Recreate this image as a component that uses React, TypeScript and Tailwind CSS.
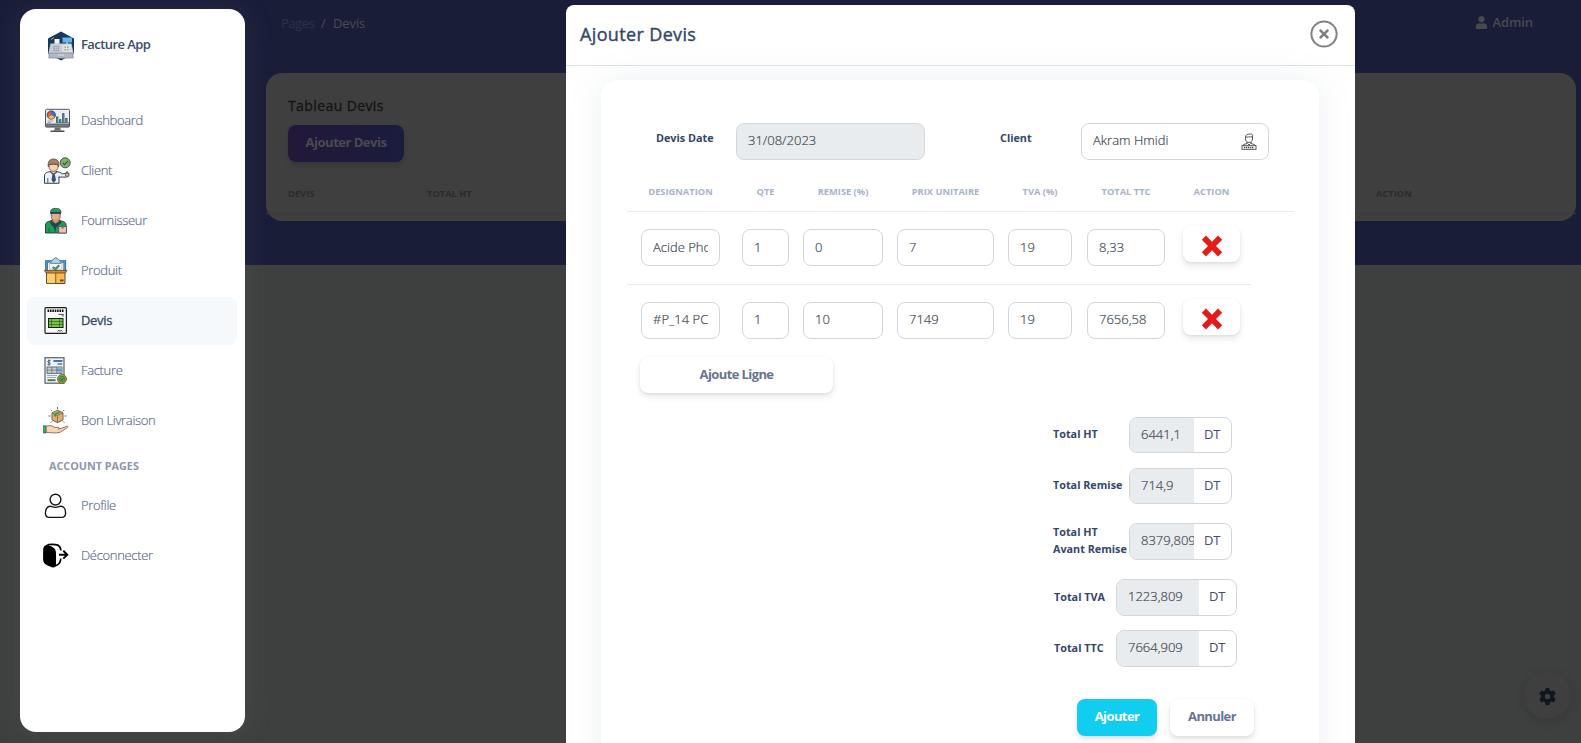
import React from "react";
import type { ReactNode } from "react";
import { FaUser } from "react-icons/fa";
import { FaGear } from "react-icons/fa6";

function Svg({ children }: { children: ReactNode }) {
  return (
    <svg width="28" height="28" viewBox="0 0 28 28" fill="none" className="shrink-0">
      {children}
    </svg>
  );
}

const DashboardIcon = () => (
  <Svg>
    <rect x="2.5" y="2.3" width="24" height="17.5" rx="1" fill="#e9eef5" stroke="#55575c" />
    <path d="M2.5 17h24v2a1 1 0 0 1-1 1h-22a1 1 0 0 1-1-1z" fill="#7b7d82" stroke="#4c4e52" strokeWidth=".8" />
    <path d="M12 20.5h5l1 3h-7z" fill="#6b6d72" />
    <rect x="7.5" y="23.4" width="14" height="1.6" rx=".5" fill="#4a4c50" />
    <circle cx="8.3" cy="8" r="4.2" fill="#3d6fc4" />
    <path d="M8.3 8V3.8a4.2 4.2 0 0 0-3 7z" fill="#e4573d" />
    <path d="M8.3 8l-3.2 2.8a4.2 4.2 0 0 0 6.8-.6z" fill="#f5c445" />
    <circle cx="8.3" cy="8" r="4.2" stroke="#3c3f4a" strokeWidth=".7" />
    <path d="M4.5 14h6M4.5 15.6h3.5" stroke="#8b929c" strokeWidth=".8" />
    <path d="M12.8 15.6h13" stroke="#38424c" strokeWidth=".6" />
    <path d="M14.2 15.5v-6M17.2 15.5v-3.2M20.3 15.5V6.3M23.4 15.5V11" stroke="#2f4858" strokeWidth="2.2" />
    <path d="M14.3 15.2v-5M17.3 15.2v-2.2M20.3 15.2V7.3M23.5 15.2v-3.4" stroke="#4d8f8d" strokeWidth="1.2" />
  </Svg>
);

const ClientIcon = () => (
  <Svg>
    <path d="M1.5 26.3v-7.5c0-2.8 2.6-4 6.5-4.3h5c3 .2 4.500 1.300 6.500 2.300l3.500-.4.6-1.600c1-.6 1.400.4 1.200 1.500l.9.200v2.400c-1.400 1.800-4.800 1.200-9.700 1.100v6.300z" fill="#e6f1fa" stroke="#3c4048" strokeWidth="1" />
    <path d="M4.800 21v5M16 21v-1.500" stroke="#4a4f58" strokeWidth=".9" />
    <path d="M7.500 14.500l3 2.800 3-2.800v-2h-6z" fill="#f4c9a5" />
    <path d="M9.500 17h2.200l1.300 6-2.300 3-2.200-3z" fill="#3a4f70" />
    <path d="M7 14.500l3.600 3 3.600-3" stroke="#3c4f70" strokeWidth="1.300" />
    <path d="M6 7.500h9v2.200a4.500 4.700 0 0 1-9 0z" fill="#f8d2b0" stroke="#564038" strokeWidth=".7" />
    <path d="M5.300 9.800C4.500 4.300 7 2 10.500 2s6.200 2.300 5.200 7.800l-1-2.500c-2 .3-3.400-.3-4.400-1.100-1 .8-2.500 1-3.900 1.100z" fill="#a9826b" stroke="#5b4539" strokeWidth=".8" />
    <path d="M22.500 16.600h3.300v2.500h-3.300z" fill="#f4c9a5" stroke="#4b4547" strokeWidth=".7" />
    <circle cx="22.200" cy="5.800" r="5" fill="#83b06e" stroke="#3f5540" strokeWidth="1" />
    <path d="M19.800 6l1.800 1.700 3.200-3.500" stroke="#35503a" strokeWidth="1.200" />
  </Svg>
);

const FournisseurIcon = () => (
  <Svg>
    <path d="M2.500 26V18c0-2.300 1.600-3.200 4-3.800l2.800-1h7l2.800 1c2.600.6 4 1.600 4 4v7.800z" fill="#1f9c58" stroke="#2a3338" strokeWidth=".9" />
    <path d="M6 26v-5M19.500 20v-2" stroke="#17603a" strokeWidth=".9" />
    <path d="M8 13.500l4.700 3.500 4.700-3.500 1 2.500-5.200 4.500-1 5-1.400-5L7 16z" fill="#2c3f52" />
    <path d="M8.300 6h8.900v3.500a4.400 4.800 0 0 1-8.900 0z" fill="#e9aa8c" stroke="#5d3f36" strokeWidth=".7" />
    <path d="M10 12.500h5.500v2L12.700 16 10 14.500z" fill="#d6957a" />
    <path d="M7.600 6V4.500C8 2 10 1.400 12.700 1.400S17.400 2 17.900 4.500V6z" fill="#22a45d" stroke="#2a3338" strokeWidth=".8" />
    <path d="M7.500 5.500c3.400-1 7-1 10.400 0v1.700c-3.400-1-7-1-10.400 0z" fill="#24445a" />
    <rect x="15.700" y="19.500" width="7.800" height="6.500" fill="#e3c3bb" stroke="#5e4747" strokeWidth=".8" />
    <path d="M18.300 19.500h2.600v2h-2.600z" fill="#9b7470" />
  </Svg>
);

const ProduitIcon = () => (
  <Svg>
    <path d="M3.500 14V4.500h18.300V14" stroke="#33495e" strokeWidth="2.600" fill="#f7fafc" />
    <path d="M3.500 14V4.500h18.300V14" stroke="#3d9be0" strokeWidth="1.600" />
    <path d="M6.500 12V5.500l3-2h6l3.500 2V12z" fill="#f3f7fb" stroke="#9ab0c4" strokeWidth=".6" />
    <path d="M9 3.300L11 2c.5-1.800 3-1.800 3.500 0l2.200 1.300 1.600 3H7.300z" fill="#b7d4ef" stroke="#54718e" strokeWidth=".9" />
    <path d="M9.800 10l2.600 2.300 3.800-4" stroke="#3e6f52" strokeWidth="2.200" />
    <path d="M9.800 10l2.600 2.300 3.800-4" stroke="#62b37b" strokeWidth="1" />
    <path d="M3.500 14h18.500v12.500H3.500z" fill="#fcb94b" stroke="#4c3b22" strokeWidth=".9" />
    <path d="M4 14.500h8.700v11.600H4z" fill="#ffcf6b" />
    <path d="M12.700 14v12.300" stroke="#7c5a25" strokeWidth=".9" />
    <path d="M1.300 13.400h22.800L22.400 16H3.200z" fill="#cf8b34" stroke="#5d4422" strokeWidth=".8" />
    <rect x="17" y="22.500" width="3.500" height="1.900" fill="#5e4829" />
  </Svg>
);

const DevisIcon = () => (
  <Svg>
    <rect x="2" y=".6" width="21.400" height="25.800" rx="1" fill="#f8f8f8" stroke="#1b1b1b" strokeWidth="1.200" />
    <path d="M4.500 3.700h16.300" stroke="#101010" strokeWidth="2.400" strokeDasharray="1.600 .8" />
    <path d="M15.500 7.400h5.300M18.800 8.900h2" stroke="#3a3a3a" strokeWidth=".9" />
    <rect x="5.500" y="11.500" width="14.500" height="9" fill="#78c63f" stroke="#141c0c" strokeWidth="1" />
    <path d="M5.500 14.500h14.500M5.500 17.500h14.500M8.500 11.500v9M16.500 11.500v9" stroke="#2c4c18" strokeWidth=".6" />
    <path d="M14.500 24.500l1.500-1.400 1 1.400 1.400-1.400 1 1.400" stroke="#222" strokeWidth=".8" />
  </Svg>
);

const FactureIcon = () => (
  <Svg>
    <rect x="2" y=".7" width="19" height="25.500" fill="#edf3fa" stroke="#596169" strokeWidth="1.200" />
    <path d="M7.500 3.700c-3-1-3.500 1.600-1.500 2s2 2.700-1.500 1.700M6 2.500v6" stroke="#45576a" strokeWidth="1" />
    <path d="M10.500 4h9" stroke="#3272b0" strokeWidth="1.900" />
    <path d="M14.500 7h4.700" stroke="#3e5670" strokeWidth="1.200" />
    <rect x="4" y="10" width="15" height="6.300" fill="#c9cdd5" stroke="#49515d" strokeWidth=".8" />
    <path d="M14 10.300h4.800v5.700H14z" fill="#83b5dd" />
    <path d="M4 13.100h15M8.800 10v6.300M13.700 10v6.300" stroke="#5e6876" strokeWidth=".7" />
    <path d="M4 18.500h10M4 20.500h9" stroke="#8d98a4" strokeWidth=".8" />
    <path d="M4.500 23.200h8" stroke="#4b7a36" strokeWidth="1.900" />
    <circle cx="19" cy="22" r="4.500" fill="#9aa23a" stroke="#6a6630" strokeWidth=".9" />
    <circle cx="19" cy="22" r="2.700" fill="#60a845" stroke="#3d6e35" strokeWidth=".7" />
    <path d="M17.600 22l1.200 1.100 2-2.200" stroke="#234c22" strokeWidth=".8" />
  </Svg>
);

const LivraisonIcon = () => (
  <Svg>
    <path d="M14.500 0v2.200M7.800 3l1.200 1.200M21.200 3L20 4.200M5.500 9h2M21.500 9h2M7.700 15.600l1.200-1.200M21.200 15.600L20 14.400" stroke="#51565c" strokeWidth=".9" />
    <path d="M14.500 3.200l5.500 2.700v7l-5.500 2.800L9 12.900v-7z" fill="#e0ac79" stroke="#755238" strokeWidth=".9" />
    <path d="M9 5.900l5.500 2.600L20 5.900M14.500 8.500v7" stroke="#875f40" strokeWidth=".8" />
    <path d="M11 6.800l5.500-2.700 2 1-5.500 2.800v2.200l-2-1z" fill="#3c9b4d" />
    <path d="M3 19.300c3.500-1.300 6-.8 8.500 1h3.700c1.500.2 1.300 1.500.3 1.800l3-.8 5.200-2c1.700-.3 1.700.7.600 1.400L17 25.300c-4.500 1.300-9 .3-14 0z" fill="#f9d5b1" stroke="#6e5949" strokeWidth=".8" />
    <rect x=".4" y="18.800" width="2.500" height="7.200" fill="#3fae4d" stroke="#2f6e3b" strokeWidth=".7" />
  </Svg>
);

const ProfileIcon = () => (
  <Svg>
    <g stroke="#151515" strokeWidth="1.400">
      <circle cx="12.500" cy="7.600" r="5.400" />
      <path d="M7.200 14.200c1.300 0 2.500 1.200 5.300 1.200s4-1.200 5.300-1.200c3.200 0 4.800 3.300 4.800 6.800 0 3.400-1.300 4.400-3.900 4.400H6.300c-2.600 0-3.900-1-3.900-4.400 0-3.500 1.600-6.800 4.800-6.800z" />
    </g>
  </Svg>
);

const LogoutIcon = () => (
  <Svg>
    <path d="M.1 9C.2 4.500 1.700 3 4.200 3.200c2 .2 4 .8 5.700 2 2.400 1.600 3.100 3.500 3.100 6.300v10.500c-.2 3-1.700 4-4.200 3.300L3.600 23C1.300 21.800.1 20 .1 17z" fill="#000" />
    <path d="M3.500 3.600C6 2 9 2.300 12.500 2.600c3.700.3 5.200 2 5.300 6M17.800 16.500c-.3 4.300-2 6.500-5.800 7.300" stroke="#000" strokeWidth="1.700" />
    <path d="M16 12.700h7.500M20.300 8.800l4 3.900-4 3.900" stroke="#000" strokeWidth="1.900" />
  </Svg>
);

const Logo = () => (
  <svg width="28" height="30" viewBox="0 0 28 30" className="shrink-0">
    <path d="M14 .5l13 7v15l-13 7-13-7v-15z" fill="#17395c" />
    <rect x="15.500" y="6.500" width="9.500" height="5" fill="#63b5ee" />
    <path d="M19 11h2v3h-2z" fill="#9db2c8" />
    <path d="M7.500 8h5v6h-5z" fill="#eef0f4" />
    <path d="M4 8.500l3-2" stroke="#d1a64a" strokeWidth="1" />
    <path d="M3.500 12.500h21l2 9.500h-25z" fill="#c6cad4" />
    <path d="M14.500 13.500H24l1.200 7.500h-10z" fill="#dde0e7" />
    <path d="M6.500 15h5.500v5H6.500z" fill="#8e95a5" />
    <path d="M8.300 15v5M10.200 15v5M6.500 16.700H12M6.500 18.400H12" stroke="#d9dce3" strokeWidth=".6" />
    <path d="M17.500 15.500h1.500v1.500h-1.500zM20 18h1.500v1.500H20z" fill="#e49356" />
    <path d="M20 15.500h1.500v1.500H20zM17.500 18h1.500v1.500h-1.500z" fill="#76bb91" />
    <rect x="1.500" y="21.500" width="25" height="6" rx=".5" fill="#9aa1b1" />
    <rect x="3" y="22.800" width="22" height="3.500" fill="#b1b7c4" />
    <path d="M11 24h6" stroke="#dfe2e8" strokeWidth="1" />
  </svg>
);

const ClientBadge = () => (
  <svg width="16" height="17" viewBox="0 0 16 17" fill="none" stroke="#454545" strokeWidth=".9">
    <path d="M4.500 4c0-2 1.500-3 5-3 2 0 2.500 1 2 3v2c0 2-1.500 3.500-3.500 3.500S4.500 8 4.500 6z" />
    <path d="M4.500 3.900c2 .7 4-.6 7 .1" />
    <path d="M6 9v1.500L2.500 11.600 1.700 13M10 9v1.500l3.500 1.100.8 1.400M6.500 10.500L8 12l1.500-1.500" />
    <rect x="1" y="12.700" width="14" height="3.600" />
    <path d="M3 14.500h10" strokeDasharray="1.300 .7" strokeWidth="1.600" />
  </svg>
);

const navItems = [
  { label: "Dashboard", Icon: DashboardIcon },
  { label: "Client", Icon: ClientIcon },
  { label: "Fournisseur", Icon: FournisseurIcon },
  { label: "Produit", Icon: ProduitIcon },
  { label: "Devis", Icon: DevisIcon, active: true },
  { label: "Facture", Icon: FactureIcon },
  { label: "Bon Livraison", Icon: LivraisonIcon },
];

const accountItems = [
  { label: "Profile", Icon: ProfileIcon },
  { label: "Déconnecter", Icon: LogoutIcon },
];

function NavRow({ label, Icon, active }: { label: string; Icon: () => ReactNode; active?: boolean }) {
  return (
    <a
      className={
        "mb-0.5 flex h-12 items-center rounded-lg pl-4 text-[13px] tracking-[-0.33px] " +
        (active
          ? "bg-[#f6f9fc] font-normal text-[#344767] [-webkit-text-stroke:0.3px_#344767]"
          : "font-light text-[#54648a] [-webkit-text-stroke:0.15px_#54648a]")
      }
    >
      <Icon />
      <span className="-mt-px ml-2.5">{label}</span>
    </a>
  );
}

function Sidebar() {
  return (
    <aside className="mt-[9px] ml-5 h-[723px] w-[225px] shrink-0 rounded-2xl bg-white pt-[22px] pr-2 pl-[7px] shadow-[0_0_32px_rgba(136,152,170,0.12)]">
      <div className="flex h-[30px] items-center pl-5">
        <Logo />
        <span className="-mt-0.5 ml-1.5 text-[13px] font-semibold tracking-[-0.58px] text-[#3a4c6c]">Facture App</span>
      </div>
      <nav className="mt-9">
        {navItems.map((item) => (
          <NavRow key={item.label} {...item} />
        ))}
      </nav>
      <h6 className="mt-3 mb-2 pl-[22px] text-[10.800px] leading-[17px] font-bold text-[#8b96aa]">ACCOUNT PAGES</h6>
      <nav>
        {accountItems.map((item) => (
          <NavRow key={item.label} {...item} />
        ))}
      </nav>
    </aside>
  );
}

function Page() {
  return (
    <main className="ml-[21px] w-[1310px] shrink-0">
      <header className="flex h-[73px] items-start justify-between pt-[13px] pr-[43px] pl-[15px] text-[13px] leading-[21px]">
        <div className="flex tracking-[-0.1px] text-[#4a4c4f]">
          <span className="w-10 tracking-[-0.4px] text-[#2f3349]">Pages</span>
          <span className="w-3">/</span>
          <span>Devis</span>
        </div>
        <div className="-mt-px flex items-center gap-[5px] font-semibold tracking-[-0.1px] text-[#48494d]">
          <FaUser size={13} />
          Admin
        </div>
      </header>
      <section className="h-[148px] rounded-2xl bg-[#3f3f3f] pt-[23px]">
        <h6 className="pl-[22px] text-[14px] leading-5 font-normal tracking-[0.4px] text-[#121416] [-webkit-text-stroke:0.3px_#121416]">Tableau Devis</h6>
        <button className="mt-[9px] ml-[22px] flex h-[37px] w-[116px] items-center justify-center rounded-lg bg-linear-to-r from-[#23173a] to-[#191d3c] pb-px text-[13px] font-bold tracking-[-0.5px] text-[#4a4a4d] shadow-[0_3px_5px_rgba(0,0,0,0.14)]">
          Ajouter Devis
        </button>
        <div className="mt-[23px] flex h-[29px] border-b border-[#393b3d] pl-[22px] text-[9.300px] leading-[18px] font-bold text-[#292b2e]">
          <span className="w-[139px]">DEVIS</span>
          <span className="w-[949px]">TOTAL HT</span>
          <span>ACTION</span>
        </div>
      </section>
    </main>
  );
}

const heads = ["DESIGNATION", "QTE", "REMISE (%)", "PRIX UNITAIRE", "TVA (%)", "TOTAL TTC", "ACTION"];
const widths = ["w-[79px]", "w-[47px]", "w-[80px]", "w-[97px]", "w-[64px]", "w-[78px]", "w-[57px]"];
const lines = [
  ["Acide Pho", "1", "0", "7", "19", "8,33"],
  ["#P_14 PC", "1", "10", "7149", "19", "7656,58"],
];
const columns = "grid grid-cols-[101px_61px_94px_111px_79px_96px_57px] pl-3.5";

function LineRow({ values, leading }: { values: string[]; leading: string }) {
  return (
    <div className={columns}>
      {values.map((value, i) => (
        <div
          key={i}
          className={
            "h-[37px] rounded-lg border border-[#d2d6da] bg-white px-[11px] text-[13px] font-light text-[#41484f] [-webkit-text-stroke:0.2px_#41484f] " +
            leading +
            " " +
            widths[i]
          }
        >
          <div className="overflow-hidden whitespace-nowrap">{value}</div>
        </div>
      ))}
      <button className="-mt-[3px] flex h-9 w-[57px] items-center justify-center rounded-lg bg-white pt-[3px] shadow-[0_4px_6px_rgba(50,50,93,0.1),0_1px_3px_rgba(0,0,0,0.08)]">
        <svg width="22" height="22" viewBox="0 0 22 22">
          <path d="M5 .5l6 6.200 6-6.200 4.200 4.300-6.200 6.200 6.200 6.200-4.200 4.300-6-6.200-6 6.200-4.200-4.300L7 11 .8 4.800z" fill="#e51b1b" />
        </svg>
      </button>
    </div>
  );
}

function Total({ label, value, wide, className }: { label: ReactNode; value: string; wide?: boolean; className: string }) {
  return (
    <div className={"flex items-center " + className}>
      <span
        className={
          "-mt-[3px] shrink-0 text-[10.800px] leading-[17px] font-bold whitespace-nowrap text-[#344767] " +
          (wide ? "ml-px w-[62px]" : "w-[76px]")
        }
      >
        {label}
      </span>
      <div className={"flex h-full overflow-hidden rounded-lg border border-[#d2d6da] bg-white text-[13px] leading-[33px] " + (wide ? "w-[121px]" : "w-[103px]")}>
        <span
          className={
            "shrink-0 overflow-hidden bg-[#e9ecef] pl-[11px] font-light text-[#41484f] [-webkit-text-stroke:0.2px_#41484f] " +
            (wide ? "w-[82px]" : "w-16")
          }
        >
          {value}
        </span>
        <span className={"tracking-[-0.3px] text-[#3f4e70] " + (wide ? "pl-2.5" : "pl-[10px]")}>DT</span>
      </div>
    </div>
  );
}

function Modal() {
  return (
    <div role="dialog" className="absolute top-[5px] left-[566px] h-[760px] w-[789px] overflow-hidden rounded-lg bg-white">
      <div className="flex h-[61px] items-center justify-between border-b border-[#dee2e6] pr-[17px] pl-3.5">
        <h5 className="-mt-0.5 text-lg font-normal tracking-[0.36px] text-[#344767] [-webkit-text-stroke:0.4px_#344767]">Ajouter Devis</h5>
        <svg width="28" height="28" viewBox="0 0 28 28" fill="none" stroke="#808080" className="-mt-[3px]">
          <circle cx="14" cy="14" r="12.600" strokeWidth="2" />
          <path d="M9.800 9.800l8.400 8.400M18.200 9.800l-8.400 8.400" strokeWidth="2.600" />
        </svg>
      </div>
      <div className="mt-3.5 ml-[35px] h-[700px] w-[718px] rounded-2xl bg-white pt-[43px] pl-[26px] shadow-[0_0_32px_rgba(136,152,170,0.15)]">
        <div className="flex h-[37px] items-center pl-[29px] text-[13px] font-light text-[#41484f]">
          <span className="-mt-[6px] w-20 text-[10.800px] font-bold text-[#344767]">Devis Date</span>
          <div className="h-[37px] w-[189px] rounded-lg border border-[#d2d6da] bg-[#e9ecef] pl-[11px] leading-[33px] [-webkit-text-stroke:0.2px_#41484f]">
            31/08/2023
          </div>
          <span className="-mt-[6px] ml-[75px] w-[81px] text-[10.800px] font-bold text-[#344767]">Client</span>
          <div className="flex h-[37px] w-[188px] items-center justify-between rounded-lg border border-[#d2d6da] pr-[11px] pl-[11px] leading-[33px] [-webkit-text-stroke:0.2px_#41484f]">
            <span className="-mt-0.5">Akram Hmidi</span>
            <ClientBadge />
          </div>
        </div>
        <div className={"mt-[22px] h-[30px] w-[667px] border-b border-[#e9ecef] text-[9.300px] leading-[19px] font-bold text-[#a8b3c6] " + columns}>
          {heads.map((head, i) => (
            <span key={head} className={"flex justify-center whitespace-nowrap " + widths[i]}>
              {head}
            </span>
          ))}
        </div>
        <div className="h-[73px] w-[624px] border-b border-[#e9ecef] pt-[17px]">
          <LineRow values={lines[0]} leading="leading-[34px]" />
        </div>
        <div className="pt-[17px]">
          <LineRow values={lines[1]} leading="leading-[33px]" />
        </div>
        <button className="mt-[18px] ml-[13px] flex h-9 w-[193px] items-center justify-center rounded-lg bg-white pb-px text-[13px] font-bold tracking-[-0.6px] text-[#67748e] shadow-[0_4px_6px_rgba(50,50,93,0.1),0_1px_3px_rgba(0,0,0,0.08)]">
          Ajoute Ligne
        </button>
        <div className="ml-[426px] pt-6">
          <Total label="Total HT" value="6441,1" className="h-9" />
          <Total label="Total Remise" value="714,9" className="mt-[15px] h-9" />
          <Total
            label={
              <>
                Total HT
                <br />
                Avant Remise
              </>
            }
            value="8379,809"
            className="mt-[19px] h-[37px]"
          />
          <Total label="Total TVA" value="1223,809" wide className="mt-[19px] h-[37px]" />
          <Total label="Total TTC" value="7664,909" wide className="mt-3.5 h-[37px]" />
        </div>
        <div className="mt-8 ml-[450px] flex gap-[13px] text-[13px] font-bold tracking-[-0.6px]">
          <button className="h-[37px] w-20 rounded-lg bg-[#11cdef] pb-0.5 text-white shadow-[0_4px_6px_rgba(50,50,93,0.1),0_1px_3px_rgba(0,0,0,0.08)]">
            Ajouter
          </button>
          <button className="h-[37px] w-[84px] rounded-lg bg-white pb-0.5 text-[#67748e] shadow-[0_4px_6px_rgba(50,50,93,0.1),0_1px_3px_rgba(0,0,0,0.08)]">
            Annuler
          </button>
        </div>
      </div>
    </div>
  );
}

export default function App() {
  return (
    <div className="relative flex h-[743px] w-[1581px] items-start overflow-hidden bg-[linear-gradient(#191d38_265px,#3e403f_265px)] font-['Open_Sans',sans-serif]">
      <Sidebar />
      <Page />
      <div className="absolute right-[10px] bottom-[24px] flex h-[47px] w-[47px] items-center justify-center rounded-full bg-[#3f3f3f] pt-px text-[#10161d] shadow-[0_2px_12px_rgba(0,0,0,0.12)]">
        <FaGear size={17} />
      </div>
      <Modal />
    </div>
  );
}
